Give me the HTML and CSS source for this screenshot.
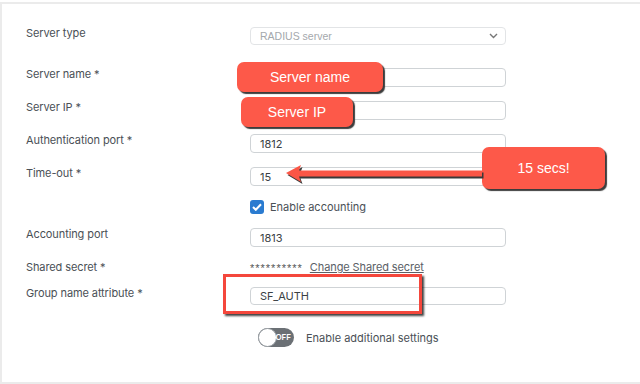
FILE: index.html
```html
<!DOCTYPE html>
<html>
<head>
<meta charset="utf-8">
<link rel="stylesheet" href="styles.css">
</head>
<body>
<div class="panel">
  <div class="row row-first">
    <div class="label">Server type</div>
    <div class="control select"><span>RADIUS server</span>
      <svg class="chev" width="9" height="6" viewBox="0 0 9 6"><path d="M1 1l3.5 3.5L8 1" fill="none" stroke="#777" stroke-width="1.4"/></svg>
    </div>
  </div>
  <div class="row row-wide">
    <div class="label">Server name *</div>
    <div class="control input"></div>
  </div>
  <div class="row">
    <div class="label">Server IP *</div>
    <div class="control input"></div>
  </div>
  <div class="row">
    <div class="label">Authentication port *</div>
    <div class="control input">1812</div>
  </div>
  <div class="row">
    <div class="label">Time-out *</div>
    <div class="control input">15</div>
  </div>
  <div class="row row-check">
    <div class="label"></div>
    <div class="check-wrap">
      <span class="checkbox"><svg width="10" height="8" viewBox="0 0 10 8"><path d="M1 4l2.8 2.8L9 1.3" fill="none" stroke="#fff" stroke-width="2"/></svg></span>
      <span class="ctext">Enable accounting</span>
    </div>
  </div>
  <div class="row">
    <div class="label">Accounting port</div>
    <div class="control input">1813</div>
  </div>
  <div class="row row-secret">
    <div class="label">Shared secret *</div>
    <div class="secret"><span class="stars">**********</span><span class="link">Change Shared secret</span></div>
  </div>
  <div class="row row-group">
    <div class="label">Group name attribute *</div>
    <div class="control input">SF_AUTH</div>
  </div>
  <div class="row row-wide">
    <div class="label"></div>
    <div class="toggle-wrap">
      <span class="toggle"><span class="knob"></span><span class="off">OFF</span></span>
      <span class="ctext">Enable additional settings</span>
    </div>
  </div>

  <div class="callout c-name">Server name</div>
  <div class="callout c-ip">Server IP</div>
  <div class="callout c-secs">15 secs!</div>
  <svg class="arrow" width="200" height="22" viewBox="0 0 200 22">
    <path d="M2 9 L17 1 L15 6.5 L198 6.5 L198 12.5 L15 12.5 L17 18 Z" fill="#3a3a3a" transform="translate(1.5,2)"/>
    <path d="M2 9 L17 1 L15 6.5 L198 6.5 L198 12.5 L15 12.5 L17 18 Z" fill="#fb5646"/>
  </svg>
  <div class="hl-box"></div>
</div>
</body>
</html>
```
FILE: styles.css
```css
html, body {
  margin: 0;
  padding: 0;
  background: #fff;
}
body {
  font-family: Inter, "Noto Sans", sans-serif;
  font-size: 11px;
  color: #4a5056;
}
.panel {
  position: relative;
  margin-top: 2px;
  height: 378px;
  border-top: 2px solid #ebebeb;
  border-bottom: 2px solid #ebebeb;
  border-left: 2px solid #ebebeb;
  padding-left: 24px;
  display: flex;
  flex-direction: column;
}
.row {
  display: flex;
  align-items: flex-start;
  margin-top: 14px;
  height: 19px;
  flex: none;
}
.row-first { margin-top: 23px; height: 18px; }
.row-wide { margin-top: 23px; }
.row-check { height: 14px; }
.row-secret { height: 12px; }
.row-group { margin-top: 14px; height: 18px; }
.label {
  width: 224px;
  flex: none;
  line-height: 13px;
  letter-spacing: -0.1px;
}
.control {
  box-sizing: border-box;
  width: 256px;
  height: 100%;
  border: 1px solid #cfd3d6;
  border-radius: 4px;
  padding-left: 9px;
  display: flex;
  align-items: center;
  color: #3a3f44;
  font-size: 11px;
}
.select {
  border-color: #e2e4e6;
  color: #a4a8ac;
  justify-content: space-between;
  padding-right: 7px;
  font-family: "Liberation Sans", Arial, sans-serif;
  font-size: 10.5px;
}
.check-wrap, .toggle-wrap {
  display: flex;
  align-items: center;
  height: 100%;
}
.checkbox {
  width: 14px;
  height: 14px;
  border-radius: 3px;
  background: #2a7bd0;
  display: flex;
  align-items: center;
  justify-content: center;
}
.ctext {
  margin-left: 6px;
  color: #4a5056;
}
.secret {
  display: flex;
  align-items: center;
  height: 12px;
}
.stars {
  font-family: "Liberation Sans", Arial, sans-serif;
  font-size: 11px;
  letter-spacing: 1px;
  color: #555;
  line-height: 12px;
  padding-top: 2px;
}
.link {
  margin-left: 7px;
  text-decoration: underline;
  color: #5a6066;
  letter-spacing: -0.1px;
}
.toggle-wrap { padding-left: 8px; }
.toggle {
  position: relative;
  width: 36px;
  height: 19px;
  border-radius: 10px;
  background: #6b7075;
  display: block;
}
.knob {
  position: absolute;
  left: 0;
  top: 0;
  box-sizing: border-box;
  width: 19px;
  height: 19px;
  border-radius: 50%;
  background: #fff;
  border: 1px solid #9aa0a5;
}
.off {
  position: absolute;
  right: 3px;
  top: 5px;
  font-size: 8px;
  line-height: 9px;
  color: #fff;
  font-weight: 600;
}
.toggle-wrap .ctext { margin-left: 12px; }

.callout {
  position: absolute;
  background: #fd5949;
  color: #fff;
  font-family: "Liberation Sans", Arial, sans-serif;
  font-size: 14px;
  border-radius: 7px;
  box-shadow: 2px 2px 1px #3c3c3c;
  display: flex;
  align-items: center;
  justify-content: center;
}
.c-name { left: 235px; top: 58px; width: 146px; height: 30px; }
.c-ip { left: 239px; top: 93px; width: 112px; height: 30px; }
.c-secs { left: 480px; top: 143px; width: 123px; height: 42px; }
.arrow {
  position: absolute;
  left: 282px;
  top: 160px;
}
.hl-box {
  position: absolute;
  left: 221px;
  top: 270px;
  width: 193px;
  height: 34px;
  border: 3px solid #f4473c;
  box-shadow: 2px 2px 2px rgba(0,0,0,0.75);
}
```
